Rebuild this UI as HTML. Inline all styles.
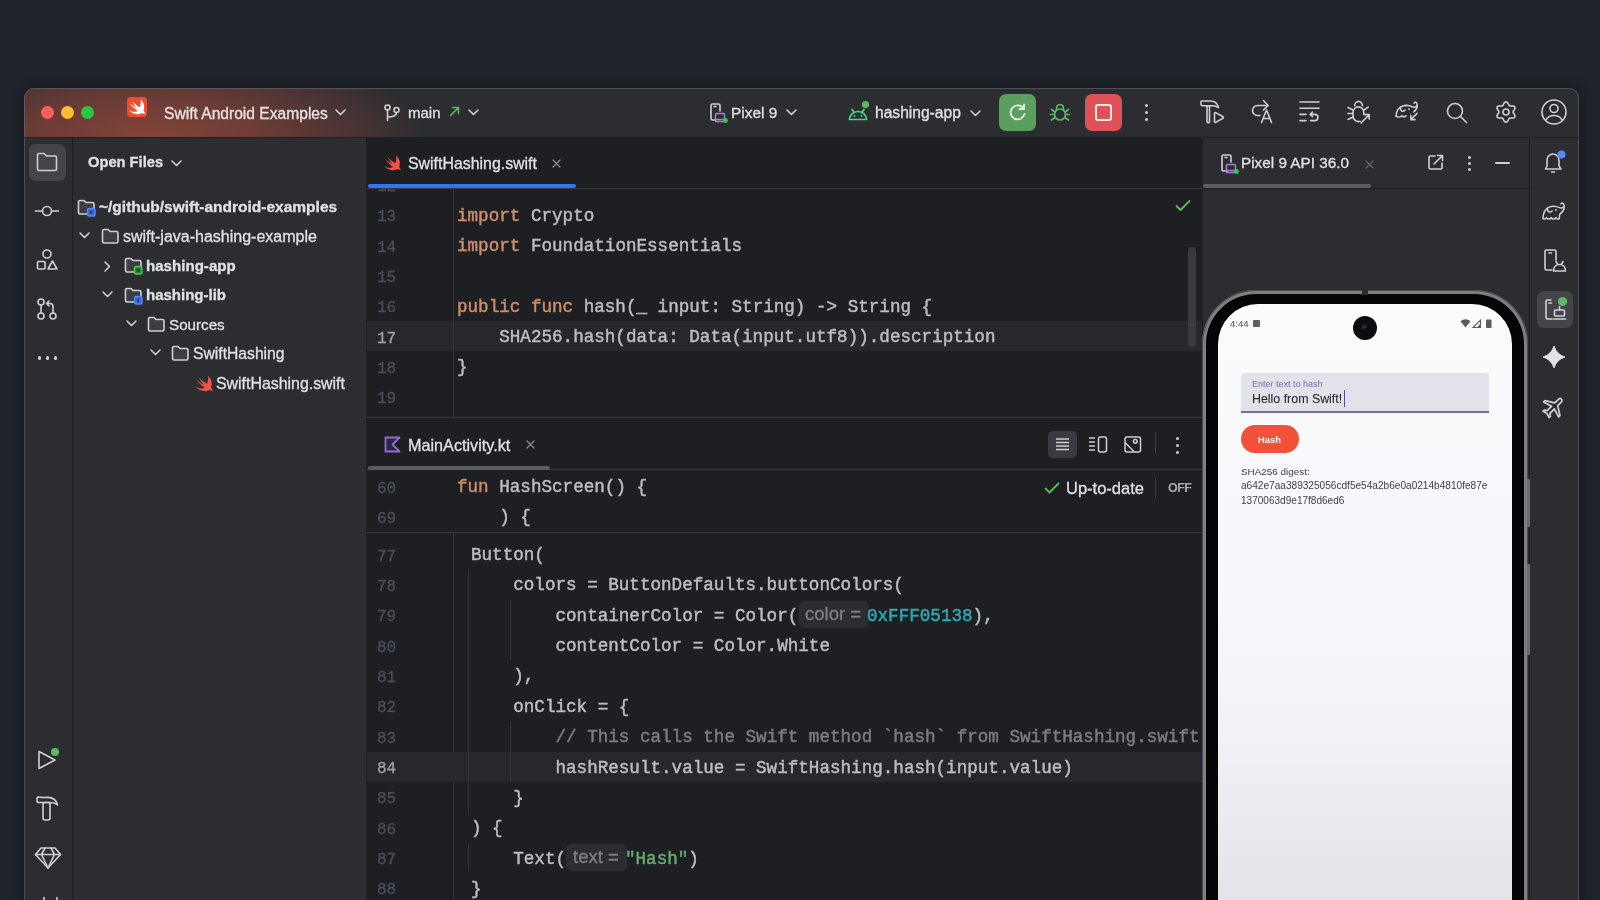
<!DOCTYPE html>
<html><head><meta charset="utf-8">
<style>
*{box-sizing:border-box;margin:0;padding:0}
html,body{width:1600px;height:900px;overflow:hidden;-webkit-font-smoothing:antialiased;background:#1f232b;font-family:"Liberation Sans",sans-serif;color:#dfe1e5;position:relative}
.a{position:absolute}
.t{position:absolute;white-space:pre;line-height:1;will-change:transform;-webkit-text-stroke:0.3px currentColor}
.ln{position:absolute;will-change:transform;left:377px;color:#4b5059;font-family:"Liberation Mono",monospace;font-size:16px;white-space:pre;line-height:1;-webkit-text-stroke:0.3px currentColor}
.c{position:absolute;white-space:pre;line-height:1;will-change:transform;color:#bcbec4;font-family:"Liberation Mono",monospace;font-size:17.6px;-webkit-text-stroke:0.45px currentColor}
.kw{color:#cf8e6d}
.num{color:#2aacb8}
.str{color:#6aab73}
.cmt{color:#7a7e85}
.hint{display:inline-block;background:#2f3136;color:#868a91;font-family:"Liberation Sans",sans-serif;font-size:16px;border-radius:4px;height:25px;line-height:25px;vertical-align:middle}
svg{position:absolute;overflow:visible}
.ic{fill:none;stroke:#ced0d6;stroke-width:1.6;stroke-linecap:round;stroke-linejoin:round}
</style></head><body>
<!-- window shell -->
<div class="a" style="left:24px;top:88px;width:1555px;height:840px;border-radius:10px;background:#2b2d30;box-shadow:0 0 12px 2px rgba(0,0,0,0.3);overflow:hidden">
  <div class="a" style="left:0;top:0;width:1555px;height:49px;background:radial-gradient(ellipse 280px 95px at 125px 50px,#844539 0%,#6c3c36 40%,#483334 75%,#2b2d30 100%)"></div>
</div>
<div class="a" style="left:24px;top:88px;width:1555px;height:840px;border-radius:10px;border:1px solid rgba(120,122,128,0.45)"></div>
<!-- title bar separator -->
<div class="a" style="left:24px;top:137px;width:1555px;height:1px;background:#1e1f22"></div>
<!-- left strip border -->
<div class="a" style="left:72px;top:138px;width:1px;height:762px;background:#1e1f22"></div>
<!-- project panel border -->
<div class="a" style="left:366px;top:138px;width:1px;height:762px;background:#1e1f22"></div>
<!-- editor bg -->
<div class="a" style="left:367px;top:138px;width:835px;height:762px;background:#1e1f22"></div>
<!-- editor/devices border -->
<div class="a" style="left:1202px;top:138px;width:1px;height:762px;background:#1e1f22"></div>
<!-- right strip border -->
<div class="a" style="left:1529px;top:138px;width:1px;height:762px;background:#1e1f22"></div>

<!-- traffic lights -->
<div class="a" style="left:40.5px;top:105.5px;width:13px;height:13px;border-radius:50%;background:#fe5f57"></div>
<div class="a" style="left:60.5px;top:105.5px;width:13px;height:13px;border-radius:50%;background:#febc2e"></div>
<div class="a" style="left:80.5px;top:105.5px;width:13px;height:13px;border-radius:50%;background:#28c840"></div>

<!-- swift logo -->
<div class="a" style="left:127px;top:97px;width:20px;height:20px;border-radius:4px;background:#ee4b31"></div>
<svg style="left:127px;top:97px" width="20" height="20" viewBox="0 0 56 56"><path transform="translate(28 28) scale(0.9) translate(-29 -28)" d="M40 5C50 13 54 27 49.5 39.5 52.5 43 54.5 47.5 53.5 51 50.5 47.5 46 46.5 41.5 48 31 53 15 50 4 37 13 43 24 44.5 31 40.5 20 33 11 23 6.5 15.5 14 22.5 22 28.5 29.5 32.5 23.5 26.5 18 19 14.5 11.5 22 18.5 30 24.5 38 28.5 40.5 20.5 42 13 40 5Z" fill="#fff"/></svg>
<div class="t" style="left:164px;top:106px;font-size:15.6px;color:#eae3e1">Swift Android Examples</div>
<svg style="left:335px;top:109px" width="11" height="7" viewBox="0 0 11 7"><path class="ic" d="M1 1l4.5 4.5L10 1" stroke-width="1.4"/></svg>

<!-- git branch -->
<svg style="left:384px;top:104px" width="16" height="18" viewBox="0 0 16 18"><g class="ic" stroke-width="1.5"><circle cx="3.5" cy="3.5" r="2.5"/><circle cx="12.5" cy="6" r="2.5"/><path d="M3.5 6v10.5M12.5 8.5c0 3-3 4.5-9 4.5"/></g></svg>
<div class="t" style="left:408px;top:105px;font-size:15px;color:#dfe1e5">main</div>
<svg style="left:449px;top:106px" width="11" height="11" viewBox="0 0 11 11"><path d="M1.5 9.5L9.5 1.5M3.5 1.5h6v6" fill="none" stroke="#5fb865" stroke-width="1.6" stroke-linecap="round"/></svg>
<svg style="left:468px;top:109px" width="11" height="7" viewBox="0 0 11 7"><path class="ic" d="M1 1l4.5 4.5L10 1" stroke-width="1.4"/></svg>

<!-- device selector -->
<svg style="left:709px;top:103px" width="20" height="20" viewBox="0 0 20 20"><g class="ic" stroke-width="1.4"><path d="M7 17H3.5a1.5 1.5 0 0 1-1.5-1.5v-13A1.5 1.5 0 0 1 3.5 1h6A1.5 1.5 0 0 1 11 2.5V8"/><path d="M5 3.5h2"/></g><rect x="6.5" y="10.5" width="9" height="6" rx="1" fill="none" stroke="#a680d8" stroke-width="1.5"/><path d="M6 18.5h10" stroke="#a680d8" stroke-width="1.5"/><circle cx="16.5" cy="17.5" r="2.4" fill="#2fd03a"/></svg>
<div class="t" style="left:731px;top:105px;font-size:15.4px;color:#dfe1e5">Pixel 9</div>
<svg style="left:786px;top:109px" width="11" height="7" viewBox="0 0 11 7"><path class="ic" d="M1 1l4.5 4.5L10 1" stroke-width="1.4"/></svg>

<!-- run config -->
<svg style="left:848px;top:100px" width="24" height="22" viewBox="0 0 24 22"><g fill="none" stroke="#3ddc84" stroke-width="1.7" stroke-linecap="round"><path d="M1.5 19.5c0-4.5 3.6-8 8.5-8s8.5 3.5 8.5 8z"/><path d="M4 9.5l2.3 3.2M16 9.5l-2.3 3.2"/></g><circle cx="6.5" cy="16" r="1" fill="#3ddc84"/><circle cx="13.5" cy="16" r="1" fill="#3ddc84"/><circle cx="17.5" cy="4.5" r="3.6" fill="#5fb865"/></svg>
<div class="t" style="left:875px;top:105px;font-size:15.6px;color:#dfe1e5">hashing-app</div>
<svg style="left:970px;top:110px" width="11" height="7" viewBox="0 0 11 7"><path class="ic" d="M1 1l4.5 4.5L10 1" stroke-width="1.4"/></svg>

<!-- rerun button -->
<div class="a" style="left:999px;top:94px;width:37px;height:37px;border-radius:7px;background:#5b9f60"></div>
<svg style="left:1007px;top:102px" width="21" height="21" viewBox="0 0 21 21"><g fill="none" stroke="#e8f3e8" stroke-width="1.8" stroke-linecap="round"><path d="M16.5 6.5A7 7 0 1 0 17.5 12"/><path d="M17 2.5v4.5h-4.5"/></g></svg>
<!-- debug -->
<svg style="left:1049px;top:101px" width="22" height="22" viewBox="0 0 22 22"><g fill="none" stroke="#5fb865" stroke-width="1.7" stroke-linecap="round"><path d="M5.5 13.5a5.5 5.5 0 0 1 11 0 5.5 5.5 0 0 1-11 0z"/><path d="M7.5 8.5V7a3.5 3.5 0 0 1 7 0v1.5"/><path d="M1.5 13.5h4M16.5 13.5h4M2.5 8.5l3.5 2.5M19.5 8.5L16 11M2.5 19l3.5-2.5M19.5 19L16 16.5"/></g></svg>
<!-- stop button -->
<div class="a" style="left:1085px;top:94px;width:37px;height:37px;border-radius:7px;background:#dd5157"></div>
<div class="a" style="left:1095px;top:104px;width:17px;height:17px;border-radius:3px;border:2px solid #fbeaea"></div>
<!-- kebab -->
<div class="a" style="left:1144.5px;top:104px;width:3px;height:3px;border-radius:50%;background:#ced0d6"></div>
<div class="a" style="left:1144.5px;top:111px;width:3px;height:3px;border-radius:50%;background:#ced0d6"></div>
<div class="a" style="left:1144.5px;top:118px;width:3px;height:3px;border-radius:50%;background:#ced0d6"></div>


<!-- right toolbar icons -->
<svg style="left:1196px;top:96px" width="32" height="32" viewBox="0 0 32 32"><g class="ic" stroke-width="1.8"><path d="M5.5 5h8.5c4.5 0 7.5 2 8.5 6.5-2-1.3-4-1.8-6-1.8H6.5A1.5 1.5 0 0 1 5 8.2V5.5z"/><path d="M13.5 10v15.5a1.2 1.2 0 0 1-1.2 1.2h-.1a1.2 1.2 0 0 1-1.2-1.2V10"/><path d="M18.5 17.3a.8.8 0 0 1 1.2-.7l7.3 4.2a.8.8 0 0 1 0 1.4l-7.3 4.2a.8.8 0 0 1-1.2-.7z"/></g></svg>
<svg style="left:1236px;top:96px" width="40" height="32" viewBox="0 0 40 32"><g class="ic" stroke-width="1.8"><path d="M24 19.5h-2.5a5 5 0 0 1 0-10H32"/><path d="M27.5 4.5L32 9.5 27.5 14"/><path d="M25.5 26.5l5-12.5 5 12.5M27.2 22.5h6.6"/></g></svg>
<svg style="left:1290px;top:95px" width="40" height="32" viewBox="0 0 40 32"><g class="ic" stroke-width="1.8"><path d="M10 7h19M10 13.2h19M10 19.4h6M10 25.6h6"/><path d="M20.5 19.4h4.3a3.1 3.1 0 0 1 0 6.2H20.5"/><path d="M22.5 17.2l-2.3 2.2 2.3 2.2"/></g></svg>
<svg style="left:1340px;top:95px" width="40" height="32" viewBox="0 0 40 32"><g class="ic" stroke-width="1.8"><path d="M14.6 10.8a3.95 4.4 0 0 1 7.9 0"/><path d="M23.8 19.5V17.5a5.4 5.6 0 0 0-10.8 0v3.5a5.4 5.6 0 0 0 7 5.3"/><path d="M8 12.5l5 2.5M8 18.5h5M8 24.5l5-2.5M23.8 15l4.4-2.8"/><path d="M21 28l8.2-8.2M24.7 19.6h4.5v4.5"/></g></svg>
<svg style="left:1395px;top:101px" width="25" height="21" viewBox="0 0 26 22"><g class="ic" stroke-width="1.7"><path d="M1 16C1 11 3 7 8 5.2 12 3.8 16 5 19 6.2 21 7 23.5 5.5 23 3 22.6 1 20.5.6 19.8 2.2"/><path d="M23.2 4.8C23.3 7 22 9.5 19.5 11.5"/><path d="M11.5 15.5C10.5 17 8 17 7 15.5 6 17 3 17 1 16"/><path d="M5.5 6.5C5.5 10 7.5 12 10.5 9.5"/><path d="M23 13L16.5 19.5M16.5 15v4.5H21"/></g><circle cx="14.5" cy="8.5" r="1" fill="#ced0d6"/></svg>
<svg style="left:1446px;top:102px" width="22" height="22" viewBox="0 0 22 22"><g class="ic" stroke-width="1.7"><circle cx="9" cy="9" r="7.5"/><path d="M14.5 14.5l6 6"/></g></svg>
<svg style="left:1495px;top:101px" width="22" height="22" viewBox="0 0 22 22"><g class="ic" stroke-width="1.7"><path d="M11.00 0.90 L11.52 0.99 L12.03 1.24 L12.48 1.64 L12.88 2.13 L13.23 2.69 L13.51 3.26 L13.77 3.79 L14.00 4.25 L14.26 4.61 L14.55 4.85 L14.91 4.98 L15.34 5.02 L15.86 5.00 L16.44 4.95 L17.08 4.92 L17.74 4.94 L18.37 5.03 L18.94 5.23 L19.41 5.54 L19.75 5.95 L19.93 6.45 L19.97 7.01 L19.85 7.60 L19.62 8.20 L19.31 8.77 L18.96 9.31 L18.62 9.79 L18.35 10.23 L18.16 10.62 L18.10 11.00 L18.16 11.38 L18.35 11.77 L18.62 12.21 L18.96 12.69 L19.31 13.23 L19.62 13.80 L19.85 14.40 L19.97 14.99 L19.93 15.55 L19.75 16.05 L19.41 16.46 L18.94 16.77 L18.37 16.97 L17.74 17.06 L17.08 17.08 L16.44 17.05 L15.86 17.00 L15.34 16.98 L14.91 17.02 L14.55 17.15 L14.26 17.39 L14.00 17.75 L13.77 18.21 L13.51 18.74 L13.23 19.31 L12.88 19.87 L12.48 20.36 L12.03 20.76 L11.52 21.01 L11.00 21.10 L10.48 21.01 L9.97 20.76 L9.52 20.36 L9.12 19.87 L8.77 19.31 L8.49 18.74 L8.23 18.21 L8.00 17.75 L7.74 17.39 L7.45 17.15 L7.09 17.02 L6.66 16.98 L6.14 17.00 L5.56 17.05 L4.92 17.08 L4.26 17.06 L3.63 16.97 L3.06 16.77 L2.59 16.46 L2.25 16.05 L2.07 15.55 L2.03 14.99 L2.15 14.40 L2.38 13.80 L2.69 13.23 L3.04 12.69 L3.38 12.21 L3.65 11.77 L3.84 11.38 L3.90 11.00 L3.84 10.62 L3.65 10.23 L3.38 9.79 L3.04 9.31 L2.69 8.77 L2.38 8.20 L2.15 7.60 L2.03 7.01 L2.07 6.45 L2.25 5.95 L2.59 5.54 L3.06 5.23 L3.63 5.03 L4.26 4.94 L4.92 4.92 L5.56 4.95 L6.14 5.00 L6.66 5.02 L7.09 4.98 L7.45 4.85 L7.74 4.61 L8.00 4.25 L8.23 3.79 L8.49 3.26 L8.77 2.69 L9.12 2.13 L9.52 1.64 L9.97 1.24 L10.48 0.99Z"/><circle cx="11" cy="11" r="3"/></g></svg>
<svg style="left:1541px;top:99px" width="26" height="26" viewBox="0 0 26 26"><g class="ic" stroke-width="1.7"><circle cx="13" cy="13" r="12"/><circle cx="13" cy="9.5" r="4"/><path d="M5 21c1.5-3 4.5-4.5 8-4.5s6.5 1.5 8 4.5"/></g></svg>

<!-- left strip -->
<div class="a" style="left:29px;top:144px;width:37px;height:37px;border-radius:7px;background:#43454a"></div>
<svg style="left:36px;top:152px" width="22" height="20" viewBox="0 0 22 20"><path class="ic" stroke-width="1.7" d="M1.5 3a1.5 1.5 0 0 1 1.5-1.5h5l2.5 2.5H19a1.5 1.5 0 0 1 1.5 1.5V17A1.5 1.5 0 0 1 19 18.5H3A1.5 1.5 0 0 1 1.5 17z"/></svg>
<svg style="left:34px;top:204px" width="26" height="14" viewBox="0 0 26 14"><g class="ic" stroke-width="1.7"><circle cx="13" cy="7" r="4.5"/><path d="M1.5 7h7M17.5 7h7"/></g></svg>
<svg style="left:36px;top:249px" width="23" height="22" viewBox="0 0 23 22"><g class="ic" stroke-width="1.6"><circle cx="11" cy="5" r="4"/><rect x="1.5" y="12.5" width="7.5" height="7.5" rx="1"/><path d="M16.5 12l4.5 8h-9z"/></g></svg>
<svg style="left:36px;top:298px" width="23" height="22" viewBox="0 0 23 22"><g class="ic" stroke-width="1.6"><circle cx="5" cy="4" r="3"/><circle cx="5" cy="18" r="3"/><circle cx="17" cy="18" r="3"/><path d="M5 7v8M17 15V8.5a3 3 0 0 0-3-3h-3M13 3l-2.5 2.5L13 8"/></g></svg>
<div class="a" style="left:37.5px;top:356px;width:3.5px;height:3.5px;border-radius:50%;background:#ced0d6"></div>
<div class="a" style="left:45.5px;top:356px;width:3.5px;height:3.5px;border-radius:50%;background:#ced0d6"></div>
<div class="a" style="left:53.5px;top:356px;width:3.5px;height:3.5px;border-radius:50%;background:#ced0d6"></div>
<svg style="left:37px;top:748px" width="22" height="24" viewBox="0 0 22 24"><path class="ic" stroke-width="1.7" d="M2 3.5v17l16-8.5z"/><circle cx="18" cy="4" r="4" fill="#5fb865"/></svg>
<svg style="left:24px;top:790px" width="48" height="36" viewBox="0 0 48 36"><g class="ic" stroke-width="1.7"><path d="M13 8.5c0-1.2.8-1.6 2-1.4 3 .4 5 .4 8 .3 5-.2 9 1.5 10.5 7.5-2.5-2.2-5-2.6-8-2.4H15c-1.2 0-2-.6-2-1.6z"/><rect x="19" y="12.5" width="7" height="17.5" rx="2"/></g></svg>
<svg style="left:24px;top:840px" width="48" height="36" viewBox="0 0 48 36"><g class="ic" stroke-width="1.6"><path d="M17 8h14l5.5 6.5L24 28 11.5 14.5z"/><path d="M11.5 14.5h25M17.5 14.5L24 28l6.5-13.5M21 8l-3.5 6.5M27 8l3.5 6.5"/></g></svg>
<svg style="left:24px;top:880px" width="48" height="20" viewBox="0 0 48 20"><g class="ic" stroke-width="1.7"><path d="M20 17.5v3M33 17.5v3"/></g></svg>

<!-- project panel -->
<div class="t" style="left:88px;top:155px;font-size:14.7px;font-weight:700;color:#dfe1e5">Open Files</div>
<svg style="left:171px;top:160px" width="11" height="7" viewBox="0 0 11 7"><path class="ic" d="M1 1l4.5 4.5L10 1" stroke-width="1.4"/></svg><svg style="left:77px;top:199px" width="19" height="18" viewBox="0 0 19 18"><path class="ic" stroke-width="1.4" d="M1.5 3a1.5 1.5 0 0 1 1.5-1.5h4l2 2h6.5a1.5 1.5 0 0 1 1.5 1.5v8.5a1.5 1.5 0 0 1-1.5 1.5H3a1.5 1.5 0 0 1-1.5-1.5z" style="fill:#3c3e42"/><rect x="10.5" y="9.5" width="7.5" height="7.5" rx="1.5" fill="#3a66c4" stroke="#548af7" stroke-width="1.4"/><rect x="12.8" y="11.8" width="3" height="3" fill="#22439a"/></svg>
<div class="t" style="left:98.5px;top:199px;font-size:15.5px;font-weight:700;color:#dfe1e5">~/github/swift-android-examples</div>
<svg style="left:79px;top:232px" width="11" height="7" viewBox="0 0 11 7"><path class="ic" d="M1 1l4.5 4.5L10 1" stroke-width="1.4"/></svg><svg style="left:101px;top:228px" width="19" height="18" viewBox="0 0 19 18"><path class="ic" stroke-width="1.4" d="M1.5 3a1.5 1.5 0 0 1 1.5-1.5h4l2 2h6.5a1.5 1.5 0 0 1 1.5 1.5v8.5a1.5 1.5 0 0 1-1.5 1.5H3a1.5 1.5 0 0 1-1.5-1.5z" style="fill:#3c3e42"/></svg>
<div class="t" style="left:122.5px;top:229px;font-size:16px;color:#dfe1e5">swift-java-hashing-example</div>
<svg style="left:104px;top:261px" width="7" height="11" viewBox="0 0 7 11"><path class="ic" d="M1 1l4.5 4.5L1 10" stroke-width="1.4"/></svg><svg style="left:124px;top:257px" width="19" height="18" viewBox="0 0 19 18"><path class="ic" stroke-width="1.4" d="M1.5 3a1.5 1.5 0 0 1 1.5-1.5h4l2 2h6.5a1.5 1.5 0 0 1 1.5 1.5v8.5a1.5 1.5 0 0 1-1.5 1.5H3a1.5 1.5 0 0 1-1.5-1.5z" style="fill:#3c3e42"/><rect x="10.5" y="9.5" width="7.5" height="7.5" rx="1.5" fill="#2f7d3a" stroke="#57c45e" stroke-width="1.4"/><rect x="12.8" y="11.8" width="3" height="3" fill="#1c4f24"/></svg>
<div class="t" style="left:145.5px;top:258px;font-size:15.1px;font-weight:700;color:#dfe1e5">hashing-app</div>
<svg style="left:102px;top:291px" width="11" height="7" viewBox="0 0 11 7"><path class="ic" d="M1 1l4.5 4.5L10 1" stroke-width="1.4"/></svg><svg style="left:124px;top:287px" width="19" height="18" viewBox="0 0 19 18"><path class="ic" stroke-width="1.4" d="M1.5 3a1.5 1.5 0 0 1 1.5-1.5h4l2 2h6.5a1.5 1.5 0 0 1 1.5 1.5v8.5a1.5 1.5 0 0 1-1.5 1.5H3a1.5 1.5 0 0 1-1.5-1.5z" style="fill:#3c3e42"/><rect x="10.5" y="9.5" width="7.5" height="7.5" rx="1.5" fill="#3a66c4" stroke="#548af7" stroke-width="1.4"/><path d="M14.2 11.5v4" stroke="#1d3d8f" stroke-width="1.3"/></svg>
<div class="t" style="left:145.5px;top:287px;font-size:15px;font-weight:700;color:#dfe1e5">hashing-lib</div>
<svg style="left:126px;top:320px" width="11" height="7" viewBox="0 0 11 7"><path class="ic" d="M1 1l4.5 4.5L10 1" stroke-width="1.4"/></svg><svg style="left:147px;top:316px" width="19" height="18" viewBox="0 0 19 18"><path class="ic" stroke-width="1.4" d="M1.5 3a1.5 1.5 0 0 1 1.5-1.5h4l2 2h6.5a1.5 1.5 0 0 1 1.5 1.5v8.5a1.5 1.5 0 0 1-1.5 1.5H3a1.5 1.5 0 0 1-1.5-1.5z" style="fill:#3c3e42"/></svg>
<div class="t" style="left:169px;top:317px;font-size:15.2px;color:#dfe1e5">Sources</div>
<svg style="left:150px;top:349px" width="11" height="7" viewBox="0 0 11 7"><path class="ic" d="M1 1l4.5 4.5L10 1" stroke-width="1.4"/></svg><svg style="left:171px;top:345px" width="19" height="18" viewBox="0 0 19 18"><path class="ic" stroke-width="1.4" d="M1.5 3a1.5 1.5 0 0 1 1.5-1.5h4l2 2h6.5a1.5 1.5 0 0 1 1.5 1.5v8.5a1.5 1.5 0 0 1-1.5 1.5H3a1.5 1.5 0 0 1-1.5-1.5z" style="fill:#3c3e42"/></svg>
<div class="t" style="left:192.5px;top:346px;font-size:15.7px;color:#dfe1e5">SwiftHashing</div>
<svg style="left:195px;top:375px" width="18" height="17" viewBox="3 4 52 48"><path d="M40 5C50 13 54 27 49.5 39.5 52.5 43 54.5 47.5 53.5 51 50.5 47.5 46 46.5 41.5 48 31 53 15 50 4 37 13 43 24 44.5 31 40.5 20 33 11 23 6.5 15.5 14 22.5 22 28.5 29.5 32.5 23.5 26.5 18 19 14.5 11.5 22 18.5 30 24.5 38 28.5 40.5 20.5 42 13 40 5Z" fill="#f0524a"/></svg>
<div class="t" style="left:216px;top:376px;font-size:15.9px;color:#dfe1e5">SwiftHashing.swift</div>

<div class="a" style="left:367px;top:188px;width:835px;height:1px;background:#393b40;"></div>
<svg style="left:384px;top:155px" width="17" height="16" viewBox="3 4 52 48"><path d="M40 5C50 13 54 27 49.5 39.5 52.5 43 54.5 47.5 53.5 51 50.5 47.5 46 46.5 41.5 48 31 53 15 50 4 37 13 43 24 44.5 31 40.5 20 33 11 23 6.5 15.5 14 22.5 22 28.5 29.5 32.5 23.5 26.5 18 19 14.5 11.5 22 18.5 30 24.5 38 28.5 40.5 20.5 42 13 40 5Z" fill="#f0524a"/></svg>
<div class="t" style="left:408px;top:156px;font-size:15.9px;color:#dfe1e5">SwiftHashing.swift</div>
<svg style="left:552px;top:159px" width="9" height="9" viewBox="0 0 9 9"><path d="M1 1l7 7M8 1L1 8" stroke="#868a91" stroke-width="1.3" stroke-linecap="round"/></svg>
<div class="a" style="left:368px;top:184px;width:208px;height:4px;background:#3574f0;border-radius:2px"></div>
<div class="a" style="left:367px;top:321px;width:835px;height:30px;background:#26282e;"></div>
<div class="a" style="left:453px;top:189px;width:1px;height:228px;background:#313338;"></div>
<div class="a" style="left:367px;top:189px;width:80px;height:6px;overflow:hidden"><div class="ln" style="left:10px;top:-10.5px">12</div></div>
<div class="ln" style="top:209.0px;color:#4b5059">13</div>
<div class="ln" style="top:239.5px;color:#4b5059">14</div>
<div class="ln" style="top:269.8px;color:#4b5059">15</div>
<div class="ln" style="top:300.1px;color:#4b5059">16</div>
<div class="ln" style="top:330.5px;color:#a1a3ab">17</div>
<div class="ln" style="top:360.8px;color:#4b5059">18</div>
<div class="ln" style="top:391.1px;color:#4b5059">19</div>
<div class="c" style="left:457px;top:207.5px"><span class="kw">import</span> Crypto</div>
<div class="c" style="left:457px;top:238px"><span class="kw">import</span> FoundationEssentials</div>
<div class="c" style="left:457px;top:298.6px"><span class="kw">public func</span> hash(_ input: String) -&gt; String {</div>
<div class="c" style="left:457px;top:329px">    SHA256.hash(data: Data(input.utf8)).description</div>
<div class="c" style="left:457px;top:359.3px">}</div>
<svg style="left:1175px;top:199px" width="16" height="13" viewBox="0 0 16 13"><path d="M1.5 7l4 4L14.5 2" fill="none" stroke="#5fb865" stroke-width="1.8" stroke-linecap="round" stroke-linejoin="round"/></svg>
<div class="a" style="left:1188px;top:247px;width:8px;height:100px;background:#393b40;border-radius:4px"></div>
<div class="a" style="left:367px;top:417px;width:835px;height:1px;background:#393b40;"></div>
<div class="a" style="left:367px;top:469px;width:835px;height:1px;background:#393b40;"></div>
<svg style="left:384px;top:436px" width="17" height="17" viewBox="0 0 17 17"><path d="M1.5 1.5h14L8.5 8.5l7 7h-14z" fill="#2e2545" stroke="#946bd6" stroke-width="1.8" stroke-linejoin="round"/></svg>
<div class="t" style="left:408px;top:437px;font-size:16.2px;color:#dfe1e5">MainActivity.kt</div>
<svg style="left:526px;top:440px" width="9" height="9" viewBox="0 0 9 9"><path d="M1 1l7 7M8 1L1 8" stroke="#868a91" stroke-width="1.3" stroke-linecap="round"/></svg>
<div class="a" style="left:368px;top:466px;width:182px;height:4px;background:#5a5d63;border-radius:2px"></div>
<div class="a" style="left:1048px;top:431px;width:29px;height:27px;background:#393b40;border-radius:5px"></div>
<svg style="left:1055px;top:437px" width="15" height="15" viewBox="0 0 15 15"><path d="M1 2h13M1 5.5h13M1 9h13M1 12.5h13" stroke="#ced0d6" stroke-width="1.5"/></svg>
<svg style="left:1088px;top:436px" width="20" height="17" viewBox="0 0 20 17"><g stroke="#ced0d6" stroke-width="1.5" fill="none"><path d="M1 2h6M1 6h6M1 10h6M1 14h6"/><rect x="10.5" y="1" width="8" height="15" rx="2"/></g></svg>
<svg style="left:1124px;top:436px" width="18" height="17" viewBox="0 0 18 17"><g stroke="#ced0d6" stroke-width="1.5" fill="none" stroke-linejoin="round" stroke-linecap="round"><rect x="1" y="1" width="15.5" height="15" rx="2"/><path d="M1.5 7l8.5 8.5"/><circle cx="11.3" cy="5.3" r="1.9"/></g></svg>
<div class="a" style="left:1155px;top:432px;width:1px;height:22px;background:#393b40;"></div>
<div class="a" style="left:1175.5px;top:437px;width:3px;height:3px;background:#ced0d6;border-radius:50%"></div>
<div class="a" style="left:1175.5px;top:444px;width:3px;height:3px;background:#ced0d6;border-radius:50%"></div>
<div class="a" style="left:1175.5px;top:451px;width:3px;height:3px;background:#ced0d6;border-radius:50%"></div>
<div class="a" style="left:367px;top:532px;width:835px;height:1px;background:#393b40;"></div>
<div class="a" style="left:453px;top:533px;width:1px;height:367px;background:#313338;"></div>
<div class="ln" style="top:480.5px;color:#4b5059">60</div>
<div class="ln" style="top:510.5px;color:#4b5059">69</div>
<div class="c" style="left:457px;top:479px"><span class="kw">fun</span> HashScreen() {</div>
<div class="c" style="left:457px;top:509px">    ) {</div>
<svg style="left:1044px;top:482px" width="16" height="12" viewBox="0 0 16 12"><path d="M1.5 6.5l4 4L14.5 1.5" fill="none" stroke="#5fb865" stroke-width="1.8" stroke-linecap="round" stroke-linejoin="round"/></svg>
<div class="t" style="left:1065.5px;top:480px;font-size:16.5px;color:#dfe1e5">Up-to-date</div>
<div class="a" style="left:1155px;top:478px;width:1px;height:20px;background:#393b40;"></div>
<div class="t" style="left:1168px;top:482px;font-size:12.5px;font-weight:700;color:#a9abb2;letter-spacing:-0.5px;-webkit-text-stroke:0">OFF</div>
<div class="a" style="left:367px;top:752px;width:835px;height:30px;background:#26282e;"></div>
<div class="a" style="left:468px;top:569px;width:1px;height:245px;background:#313338;"></div>
<div class="a" style="left:468px;top:845px;width:1px;height:26px;background:#313338;"></div>
<div class="a" style="left:510px;top:600px;width:1px;height:60px;background:#313338;"></div>
<div class="a" style="left:510px;top:721px;width:1px;height:61px;background:#313338;"></div>
<div class="ln" style="top:548.5px;color:#4b5059">77</div>
<div class="ln" style="top:578.86px;color:#4b5059">78</div>
<div class="ln" style="top:609.22px;color:#4b5059">79</div>
<div class="ln" style="top:639.58px;color:#4b5059">80</div>
<div class="ln" style="top:669.94px;color:#4b5059">81</div>
<div class="ln" style="top:700.3px;color:#4b5059">82</div>
<div class="ln" style="top:730.66px;color:#4b5059">83</div>
<div class="ln" style="top:761.02px;color:#a1a3ab">84</div>
<div class="ln" style="top:791.38px;color:#4b5059">85</div>
<div class="ln" style="top:821.74px;color:#4b5059">86</div>
<div class="ln" style="top:852.1px;color:#4b5059">87</div>
<div class="ln" style="top:882.46px;color:#4b5059">88</div>
<div class="c" style="left:471px;top:547.0px">Button(</div>
<div class="c" style="left:471px;top:577.36px">    colors = ButtonDefaults.buttonColors(</div>
<div class="c" style="left:471px;top:607.72px">        containerColor = Color(</div>
<div class="c" style="left:471px;top:638.08px">        contentColor = Color.White</div>
<div class="c" style="left:471px;top:668.44px">    ),</div>
<div class="c" style="left:471px;top:698.8px">    onClick = {</div>
<div class="c" style="left:471px;top:729.16px">        <span class="cmt">// This calls the Swift method `hash` from SwiftHashing.swift</span></div>
<div class="c" style="left:471px;top:759.52px">        hashResult.value = SwiftHashing.hash(input.value)</div>
<div class="c" style="left:471px;top:789.88px">    }</div>
<div class="c" style="left:471px;top:820.24px">) {</div>
<div class="c" style="left:471px;top:850.6px">    Text(</div>
<div class="c" style="left:471px;top:880.96px">}</div>
<div class="a" style="left:798.5px;top:601.22px;width:70.5px;height:27px;background:#2b2d31;border-radius:5px"></div>
<div class="t" style="left:805px;top:604.72px;font-size:18.5px;color:#7e8188">color =</div>
<div class="c" style="left:866.5px;top:607.72px"><span class="num">0xFFF05138</span>),</div>
<div class="a" style="left:565.5px;top:844.1px;width:61.5px;height:27px;background:#2b2d31;border-radius:5px"></div>
<div class="t" style="left:572.5px;top:847.6px;font-size:18.5px;color:#7e8188">text =</div>
<div class="c" style="left:625px;top:850.6px"><span class="str">"Hash"</span>)</div>
<div class="a" style="left:1203px;top:188px;width:327px;height:1px;background:#1e1f22;"></div>
<svg style="left:1220px;top:154px" width="20" height="20" viewBox="0 0 20 20"><g class="ic" stroke-width="1.4"><path d="M7 17H3.5a1.5 1.5 0 0 1-1.5-1.5v-13A1.5 1.5 0 0 1 3.5 1h6A1.5 1.5 0 0 1 11 2.5V8"/><path d="M5 3.5h2"/></g><rect x="6.5" y="10.5" width="9" height="6" rx="1" fill="none" stroke="#a680d8" stroke-width="1.5"/><path d="M6 18.5h10" stroke="#a680d8" stroke-width="1.5"/><circle cx="16.5" cy="17.5" r="2.4" fill="#2fd03a"/></svg>
<div class="t" style="left:1240.5px;top:155px;font-size:15.3px;color:#dfe1e5">Pixel 9 API 36.0</div>
<svg style="left:1365px;top:160px" width="9" height="9" viewBox="0 0 9 9"><path d="M1 1l7 7M8 1L1 8" stroke="#5f6268" stroke-width="1.3" stroke-linecap="round"/></svg>
<div class="a" style="left:1203px;top:184px;width:168px;height:4px;background:#5a5d63;border-radius:2px"></div>
<svg style="left:1428px;top:154px" width="16" height="16" viewBox="0 0 16 16"><g class="ic" stroke-width="1.5"><path d="M7 2H2.5A1.5 1.5 0 0 0 1 3.5v10A1.5 1.5 0 0 0 2.5 15h10a1.5 1.5 0 0 0 1.5-1.5V9"/><path d="M6 10l8.5-8.5M9.5 1.5h5v5"/></g></svg>
<div class="a" style="left:1468px;top:155.5px;width:3px;height:3px;background:#ced0d6;border-radius:50%"></div>
<div class="a" style="left:1468px;top:161.5px;width:3px;height:3px;background:#ced0d6;border-radius:50%"></div>
<div class="a" style="left:1468px;top:167.5px;width:3px;height:3px;background:#ced0d6;border-radius:50%"></div>
<div class="a" style="left:1495px;top:161.5px;width:15px;height:2px;background:#ced0d6;border-radius:1px"></div>
<div class="a" style="left:1202px;top:290px;width:326px;height:700px;border-radius:54px;background:#7d7f83;box-shadow:inset 0 0 0 1px #4a4c50"></div>
<div class="a" style="left:1206px;top:294px;width:318px;height:700px;border-radius:50px;background:#050505"></div>
<div class="a" style="left:1218px;top:304px;width:294px;height:700px;border-radius:40px 40px 0 0;background:linear-gradient(#fbfbfd 0%,#f7f7fc 40%,#f1f1f6 62%,#e3e3e9 85%,#dcdce2 100%)"></div>
<div class="a" style="left:1362px;top:288px;width:6px;height:7px;background:#2b2d30;"></div>
<div class="a" style="left:1527px;top:564px;width:2.5px;height:91px;background:#6a6c70;border-radius:1px"></div>
<div class="a" style="left:1527px;top:479px;width:2.5px;height:48px;background:#6a6c70;border-radius:1px"></div>
<div class="a" style="left:1353px;top:316px;width:24px;height:24px;border-radius:50%;background:#0b0b10"></div>
<div class="a" style="left:1361px;top:325px;width:6px;height:4px;border-radius:50%;background:#2a2840;transform:rotate(-35deg)"></div>
<div class="t" style="left:1229.5px;top:318.5px;font-size:9.5px;color:#5c5c60;-webkit-text-stroke:0.1px currentColor">4:44</div>
<div class="a" style="left:1253px;top:320px;width:7px;height:7px;background:#606064;border-radius:1px"></div>
<svg style="left:1460px;top:319px" width="32" height="9" viewBox="0 0 32 9"><path d="M0.5 2.2C2 .9 3.9.2 5.5.2s3.5.7 5 2L5.5 8.5z" fill="#5c5c60"/><path d="M13 8.5L20.5 1v7.5z" fill="none" stroke="#5c5c60" stroke-width="1.1"/><path d="M17 8.5h3.5V4.5z" fill="#5c5c60"/><rect x="26" y="0.5" width="5.5" height="8.5" rx="1" fill="#5c5c60"/></svg>
<div class="a" style="left:1240.5px;top:373px;width:248.5px;height:40px;background:#e1e2ea;border-radius:4px 4px 0 0"></div>
<div class="a" style="left:1240.5px;top:411px;width:248.5px;height:2px;background:#6e72a6;"></div>
<div class="t" style="left:1252px;top:379.5px;font-size:9px;color:#7074a4;-webkit-text-stroke:0">Enter text to hash</div>
<div class="t" style="left:1252px;top:392.5px;font-size:12.4px;color:#2a2930;-webkit-text-stroke:0.1px currentColor">Hello from Swift!</div>
<div class="a" style="left:1343.5px;top:390px;width:1.2px;height:17px;background:#4b5190;"></div>
<div class="a" style="left:1240.5px;top:425px;width:58px;height:28px;background:#f05138;border-radius:14px"></div>
<div class="t" style="left:1258px;top:434.5px;font-size:9.4px;font-weight:700;color:#fff;-webkit-text-stroke:0">Hash</div>
<div class="t" style="left:1240.5px;top:467px;font-size:9.9px;color:#404046;-webkit-text-stroke:0">SHA256 digest:</div>
<div class="t" style="left:1240.5px;top:481px;font-size:10.1px;color:#404046;-webkit-text-stroke:0">a642e7aa389325056cdf5e54a2b6e0a0214b4810fe87e</div>
<div class="t" style="left:1240.5px;top:495.5px;font-size:10.05px;color:#404046;-webkit-text-stroke:0">1370063d9e17f8d6ed6</div>
<svg style="left:1543px;top:150px" width="22" height="24" viewBox="0 0 22 24"><g class="ic" stroke-width="1.6"><path d="M2.5 19h15.5l-2-3V10a6 6 0 0 0-12 0v6z"/><path d="M8.5 22h3"/></g><circle cx="18.5" cy="4.5" r="4" fill="#548af7"/></svg>
<svg style="left:1542px;top:201px" width="25" height="19" viewBox="0 0 26 20"><g class="ic" stroke-width="1.7"><path d="M1 18.5C1 13 3 8 8 6.2 12 4.8 16 6 19 7.2 21 8 23.5 6.5 23 4 22.6 2 20.5 1.6 19.8 3.2"/><path d="M23.2 5.8C23.5 9 21 12 18.5 14L18 18.5C16.5 19.5 15 19 14.5 17.5 13.5 19.5 10.5 19.5 9.5 17.5 8.5 19.5 5.5 19.5 4.5 17.5 3.5 19 2 19.5 1 18.5"/><path d="M5.5 7.5C5.5 11 7.5 13 10.5 10.5"/></g><circle cx="14.5" cy="9.5" r="1" fill="#ced0d6"/></svg>
<svg style="left:1543px;top:249px" width="24" height="24" viewBox="0 0 24 24"><g class="ic" stroke-width="1.6"><path d="M9 21H3.5A1.5 1.5 0 0 1 2 19.5v-17A1.5 1.5 0 0 1 3.5 1h8A1.5 1.5 0 0 1 13 2.5V11"/><path d="M6 4h2.5"/><path d="M10.5 22c0-4 2.5-6.5 6-6.5s6 2.5 6 6.5z"/><path d="M13 12.5l1.5 2.5M20 12.5L18.5 15"/></g></svg>
<div class="a" style="left:1537px;top:291px;width:36px;height:37px;background:#43454a;border-radius:7px"></div>
<svg style="left:1544px;top:296px" width="24" height="26" viewBox="0 0 24 26"><g class="ic" stroke-width="1.6"><path d="M8 23H3.5A1.5 1.5 0 0 1 2 21.5v-16A1.5 1.5 0 0 1 3.5 4H7"/><path d="M5 7h2.5"/><rect x="10.5" y="14" width="10" height="6" rx="1"/><path d="M9.5 23h12M15.5 10.5v3.5"/></g><circle cx="18.5" cy="5.5" r="4.6" fill="#5fb865"/></svg>
<svg style="left:1543px;top:346px" width="22" height="22" viewBox="0 0 22 22"><path d="M11 0Q13.6 8.4 22 11 13.6 13.6 11 22 8.4 13.6 0 11 8.4 8.4 11 0z" fill="#e1e3e8" stroke="#e1e3e8" stroke-width="0.8" stroke-linejoin="round"/></svg>
<svg style="left:1541px;top:393.5px" width="26" height="26" viewBox="0 0 24 24"><path transform="rotate(45 12 12)" class="ic" stroke-width="1.6" d="M21.5 15.5v-1.8l-8-5V3.8a1.8 1.8 0 0 0-3.6 0V8.7l-8 5v1.8l8-2.5V18.8l-2.2 1.6v1.6l4-1.1 4 1.1v-1.6l-2.2-1.6V13z"/></svg>
</body></html>
